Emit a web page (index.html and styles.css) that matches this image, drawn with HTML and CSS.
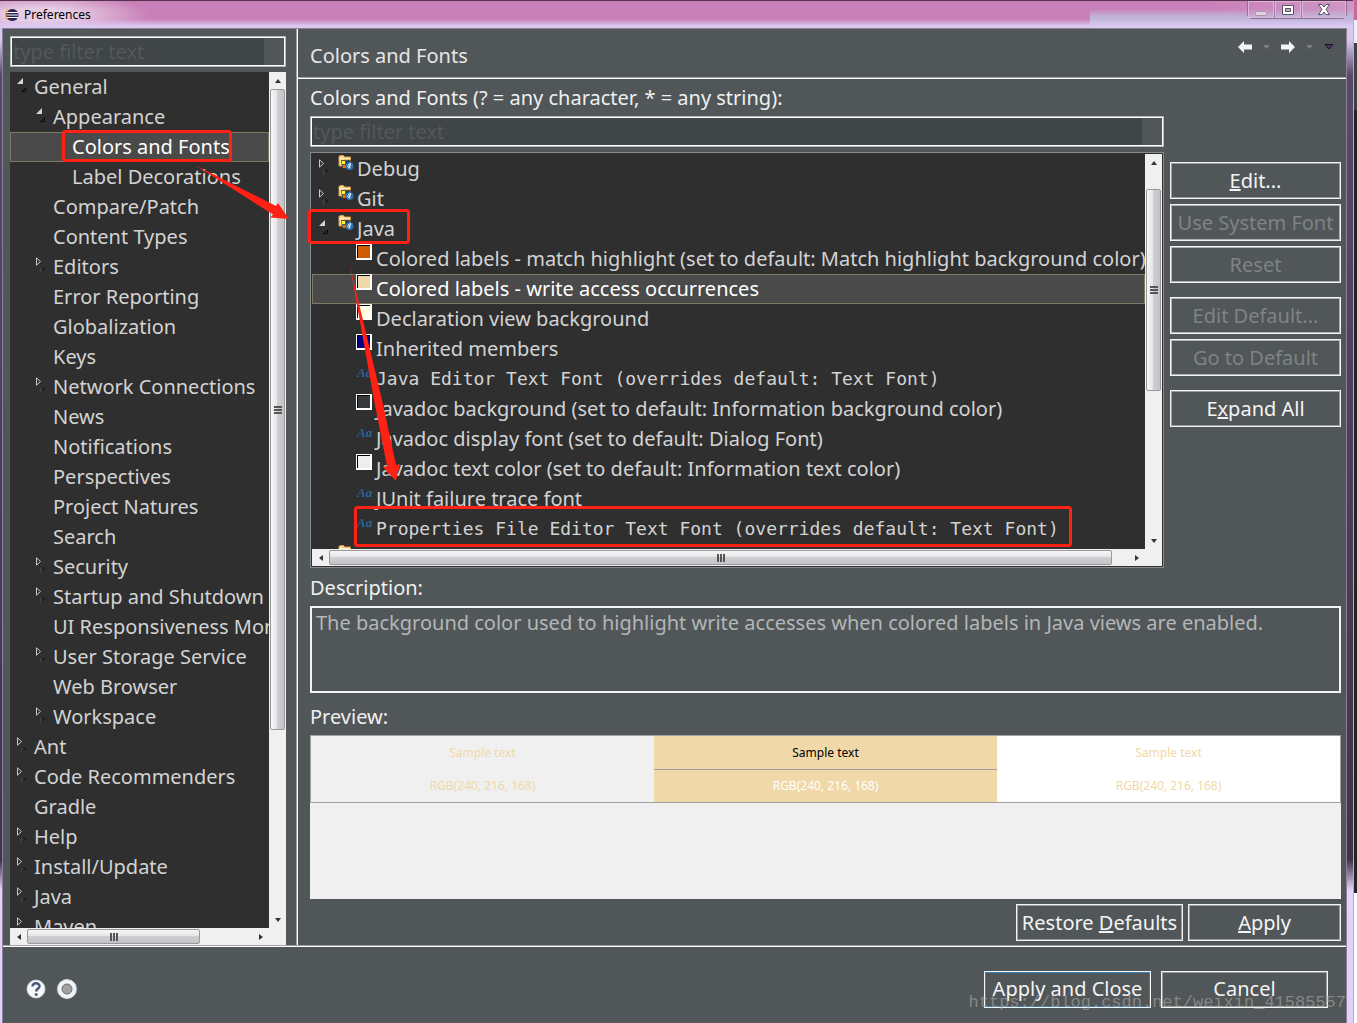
FILE: index.html
```
<!DOCTYPE html>
<html lang="en">
<head>
<meta charset="utf-8">
<title>Preferences</title>
<link rel="stylesheet" href="styles.css">
</head>
<body>
<svg class="defs" aria-hidden="true">
  <defs>
    <symbol id="open" viewBox="0 0 10 14"><path d="M6 0v6H0z" fill="#d4d4d4"/><path d="M8.500 10v3.500h-4z" fill="none" stroke="#090909"/></symbol>
    <symbol id="closed" viewBox="0 0 10 16"><path d="M.5.8v7.400L4.500 4.500z" fill="none" stroke="#c8c8c8"/><path d="M4.500 11v5" stroke="#444"/><path d="M7 10.500l1.500 1.500L7 13.500" fill="none" stroke="#0c0c0c"/></symbol>
    <symbol id="folder" viewBox="0 0 16 16">
      <path d="M1 3V1.500L2 .5h3.500l1 1.500h6V5H6v6H1z" fill="#fbd893" stroke="#d59b48"/>
      <path d="M1 3.500h11" stroke="#fff0c8"/>
      <path d="M3 5h10v8H4z" fill="#62583c"/>
      <path d="M4 6h3v3H4z" fill="#fff52c"/><path d="M8 6h3v3H8z" fill="#17347e"/><path d="M5 10h3v3H5z" fill="#ff6a00"/>
      <circle cx="11.500" cy="11" r="4" fill="#2f70aa"/><path d="M12.500 8.500c-3 0-3.500 4.500-1.500 4l1.500-4-1 5" fill="none" stroke="#d9efff"/>
    </symbol>
  </defs>
</svg>

<div class="window">
  <header class="titlebar">
    <svg class="logo" viewBox="0 0 14 14"><circle cx="6" cy="7" r="6" fill="#f59a31"/><circle cx="7.500" cy="7" r="6" fill="#29235c"/><path d="M2 4.500h11M2 7h11M2 9.500h11" stroke="#fff"/></svg>
    <span class="window-title">Preferences</span>
    <div class="window-controls">
      <button aria-label="Minimize"><svg width="12" height="6"><rect x=".5" y=".5" width="11" height="4" rx="1" fill="#e6cfe2" stroke="#a893ad"/></svg></button>
      <button aria-label="Maximize"><svg width="12" height="10"><path d="M.5.5h11v9H.5z" fill="#fff" stroke="#555566"/><path d="M3.500 3.500h5v3h-5z" fill="#c9a3cc" stroke="#555566"/></svg></button>
      <button class="close" aria-label="Close"><svg width="12" height="11" viewBox="0 0 12 11"><path d="M.5.5h3.500L6 3 8 .5h3.500L8 5.500l3.500 5H8L6 8l-2 2.500H.5L4 5.500z" fill="#fff" stroke="#555566"/></svg></button>
    </div>
  </header>

  <div class="dialog">
    <div class="main">
      <nav class="sidebar">
        <div class="field"><input type="text" placeholder="type filter text" aria-label="Filter preferences"></div>
        <div class="scrollpane">
          <ul class="tree nav-tree">
            <li><svg class="twisty"><use href="#open"/></svg>General</li>
            <li class="l2"><svg class="twisty"><use href="#open"/></svg>Appearance</li>
            <li class="l3 selected">Colors and Fonts</li>
            <li class="l3">Label Decorations</li>
            <li class="l2">Compare/Patch</li>
            <li class="l2">Content Types</li>
            <li class="l2"><svg class="twisty"><use href="#closed"/></svg>Editors</li>
            <li class="l2">Error Reporting</li>
            <li class="l2">Globalization</li>
            <li class="l2">Keys</li>
            <li class="l2"><svg class="twisty"><use href="#closed"/></svg>Network Connections</li>
            <li class="l2">News</li>
            <li class="l2">Notifications</li>
            <li class="l2">Perspectives</li>
            <li class="l2">Project Natures</li>
            <li class="l2">Search</li>
            <li class="l2"><svg class="twisty"><use href="#closed"/></svg>Security</li>
            <li class="l2"><svg class="twisty"><use href="#closed"/></svg>Startup and Shutdown</li>
            <li class="l2">UI Responsiveness Monitoring</li>
            <li class="l2"><svg class="twisty"><use href="#closed"/></svg>User Storage Service</li>
            <li class="l2">Web Browser</li>
            <li class="l2"><svg class="twisty"><use href="#closed"/></svg>Workspace</li>
            <li><svg class="twisty"><use href="#closed"/></svg>Ant</li>
            <li><svg class="twisty"><use href="#closed"/></svg>Code Recommenders</li>
            <li>Gradle</li>
            <li><svg class="twisty"><use href="#closed"/></svg>Help</li>
            <li><svg class="twisty"><use href="#closed"/></svg>Install/Update</li>
            <li><svg class="twisty"><use href="#closed"/></svg>Java</li>
            <li><svg class="twisty"><use href="#closed"/></svg>Maven</li>
          </ul>
          <div class="scroll vertical"><i class="arrow up"></i><div class="track"><div class="thumb nav-v"><i class="grip"></i></div></div><i class="arrow down"></i></div>
          <div class="scroll horizontal"><i class="arrow left"></i><div class="track"><div class="thumb nav-h"><i class="grip"></i></div></div><i class="arrow right"></i></div>
        </div>
      </nav>

      <main class="page">
        <div class="page-head">
          <h1>Colors and Fonts</h1>
          <div class="history">
            <button aria-label="Back"><svg width="14" height="12" viewBox="0 0 14 12"><path d="M0 6l6-6v3.500h8v5H6V12z" fill="#f4f4f4"/></svg></button>
            <button aria-label="Back history"><svg width="7" height="4"><path d="M0 0h7L3.500 4z" fill="#7c8082"/></svg></button>
            <button aria-label="Forward"><svg width="14" height="12" viewBox="0 0 14 12"><path d="M14 6L8 0v3.500H0v5h8V12z" fill="#f4f4f4"/></svg></button>
            <button aria-label="Forward history"><svg width="7" height="4"><path d="M0 0h7L3.500 4z" fill="#7c8082"/></svg></button>
            <button aria-label="Menu"><svg width="10" height="6"><path d="M1 .5h8L5 5z" fill="#4b3860" stroke="#1d102c"/></svg></button>
          </div>
        </div>
        <div class="page-body">
          <label class="caption" for="font-filter">Colors and Fonts (? = any character, * = any string):</label>
          <div class="chooser">
            <div class="chooser-list">
              <div class="field"><input id="font-filter" type="text" placeholder="type filter text"></div>
              <div class="scrollpane framed">
                <ul class="tree font-tree">
                  <li><svg class="twisty"><use href="#closed"/></svg><svg class="folder"><use href="#folder"/></svg>Debug</li>
                  <li><svg class="twisty"><use href="#closed"/></svg><svg class="folder"><use href="#folder"/></svg>Git</li>
                  <li><svg class="twisty"><use href="#open"/></svg><svg class="folder"><use href="#folder"/></svg>Java</li>
                  <li class="item"><i class="swatch orange"></i>Colored labels - match highlight (set to default: Match highlight background color)</li>
                  <li class="item selected"><i class="swatch sand"></i>Colored labels - write access occurrences</li>
                  <li class="item"><i class="swatch cream"></i>Declaration view background</li>
                  <li class="item"><i class="swatch navy"></i>Inherited members</li>
                  <li class="item mono"><i class="aa">Aa</i>Java Editor Text Font (overrides default: Text Font)</li>
                  <li class="item"><i class="swatch slate"></i>Javadoc background (set to default: Information background color)</li>
                  <li class="item"><i class="aa">Aa</i>Javadoc display font (set to default: Dialog Font)</li>
                  <li class="item"><i class="swatch light"></i>Javadoc text color (set to default: Information text color)</li>
                  <li class="item"><i class="aa">Aa</i>JUnit failure trace font</li>
                  <li class="item mono"><i class="aa">Aa</i>Properties File Editor Text Font (overrides default: Text Font)</li>
                  <li><svg class="folder"><use href="#folder"/></svg></li>
                </ul>
                <div class="scroll vertical"><i class="arrow up"></i><div class="track"><div class="thumb font-v"><i class="grip"></i></div></div><i class="arrow down"></i></div>
                <div class="scroll horizontal"><i class="arrow left"></i><div class="track"><div class="thumb font-h"><i class="grip"></i></div></div><i class="arrow right"></i></div>
              </div>
            </div>
            <div class="actions">
              <button class="btn"><span><u>E</u>dit...</span></button>
              <button class="btn" disabled>Use System Font</button>
              <button class="btn" disabled>Reset</button>
              <button class="btn group" disabled>Edit Default...</button>
              <button class="btn" disabled>Go to Default</button>
              <button class="btn group"><span>E<u>x</u>pand All</span></button>
            </div>
          </div>
          <label class="caption" for="description">Description:</label>
          <textarea id="description" readonly>The background color used to highlight write accesses when colored labels in Java views are enabled.</textarea>
          <div class="caption preview-caption">Preview:</div>
          <div class="preview">
            <div class="samples">
              <div class="sample"><span>Sample text</span><span>RGB(240, 216, 168)</span></div>
              <div class="sample filled"><span>Sample text</span><span>RGB(240, 216, 168)</span></div>
              <div class="sample white"><span>Sample text</span><span>RGB(240, 216, 168)</span></div>
            </div>
          </div>
          <div class="page-buttons">
            <button class="btn wide"><span>Restore <u>D</u>efaults</span></button>
            <button class="btn"><span><u>A</u>pply</span></button>
          </div>
        </div>
      </main>
    </div>

    <footer class="footer">
      <button class="round" aria-label="Help"><svg width="20" height="20" viewBox="0 0 20 20"><circle cx="10" cy="10" r="9" fill="#f6f7f9" stroke="#cbd2da"/><path d="M6.500 7.500C6.500 3 14 3.500 13.500 7.500 13.300 9.800 10.200 9.500 10.200 12.500" fill="none" stroke="#475a7c" stroke-width="2.500"/><circle cx="10.200" cy="15.500" r="1.500" fill="#475a7c"/></svg></button>
      <button class="round" aria-label="Record"><svg width="22" height="22" viewBox="0 0 22 22"><circle cx="11" cy="11" r="9.500" fill="#f2f2f2" stroke="#dce3ea"/><circle cx="11" cy="11" r="10" fill="none" stroke="#6d7f92" stroke-dasharray="2 4"/><circle cx="11" cy="11" r="5" fill="#a2a2a2" stroke="#6e6e6e"/></svg></button>
      <div class="footer-actions">
        <button class="btn wide primary">Apply and Close</button>
        <button class="btn wide">Cancel</button>
      </div>
    </footer>
  </div>
</div>
<div class="desktop"></div>

<svg class="marks" width="1357" height="1023" aria-hidden="true">
  <g fill="none" stroke="#ff2113" stroke-width="3">
    <rect x="63.500" y="131.500" width="167" height="29" rx="2"/>
    <rect x="309.500" y="210.500" width="99" height="32" rx="2"/>
    <rect x="355.500" y="507.500" width="715" height="38" rx="2"/>
  </g>
  <path d="M195 165L276 206 278 203 289 219 270 217.500 273 214.500zM350 266L382 400 396 465 400 464 396 481 383 467 387 466 374 400z" fill="#ff2113"/>
</svg>
<div class="watermark">https://blog.csdn.net/weixin_41585557</div>
</body>
</html>
```
FILE: styles.css
```
* { box-sizing: border-box; }
body {
  margin: 0;
  height: 100vh;
  display: flex;
  position: relative;
  overflow: hidden;
  font: 20px/30px "Noto Sans", "Open Sans", sans-serif;
  color: #d3d3d3;
  background: #2d2a30;
}
button { font: inherit; color: inherit; background: none; border: 0; padding: 0; }
.defs { position: absolute; width: 0; height: 0; }

.window {
  flex: 1;
  min-width: 0;
  display: flex;
  flex-direction: column;
  padding: 0 6px 0 2px;
  border-right: 1px solid #b9a9c6;
  background: linear-gradient(#d9c5ee, #d9c9f0 40px, #58496a 75px, #3f3349 860px, #e6d2fb 890px, #e2d0fb);
}
.desktop {
  width: 3px;
  background: linear-gradient(#c66a9b 0 20px, #eef0fa 20px 43px, #3d4244 43px 110px, #242424 110px 893px, #fff 893px);
}
.titlebar {
  height: 28px;
  margin: 0 -6px 0 -2px;
  padding-left: 5px;
  display: flex;
  align-items: center;
  gap: 5px;
  border-top: 1px solid #54324e;
  background:
    linear-gradient(transparent 0 18px, #dcc9f2 25px),
    radial-gradient(ellipse 110px 22px at 40px 14px, #e6cde3 30%, transparent),
    linear-gradient(transparent 8px, #c0b6da 16px) 1090px 0 / 100% 100% no-repeat,
    linear-gradient(90deg, #c97fb8 1200px, #cf96c4);
}
.logo { width: 14px; height: 14px; }
.window-title { font-size: 12px; line-height: 16px; color: #000; }
.window-controls { margin: 0 6px 0 auto; align-self: flex-start; height: 18px; display: flex; border: 1px solid #8f6f94; border-top: 0; border-radius: 0 0 5px 5px; }
.window-controls button { width: 27px; display: grid; place-items: center; border-right: 1px solid #a37da5; box-shadow: inset 0 0 0 1px #e0b5da; }
.window-controls button:first-child svg { margin-top: 8px; }
.window-controls .close { width: 44px; border: 0; }

.dialog { flex: 1; min-height: 0; display: flex; flex-direction: column; background: #515658; border: 1px solid #8b829a; border-width: 1px 1px 0; }
.main { flex: 1; min-height: 0; display: flex; border-bottom: 1px solid #fff; box-shadow: inset 0 -1px #a0a0a0; padding-bottom: 1px; }
.sidebar { width: 295px; flex: none; padding: 7px 11px 0 7px; display: flex; flex-direction: column; gap: 5px; border-right: 1px solid #fff; box-shadow: inset -1px 0 #a0a0a0; }

.field { height: 31px; flex: none; padding: 1px 21px 1px 1px; border: 1px solid #b4b7b8; box-shadow: inset 0 0 0 1px #fff; background: #515658; }
.field input { display: block; width: 100%; height: 27px; padding: 0 1px; border: 0; background: #404548; font: inherit; color: #d3d3d3; }
.field input::placeholder { color: #53585a; opacity: 1; }

.scrollpane { flex: 1; min-height: 0; display: grid; grid-template: minmax(0, 1fr) 17px / minmax(0, 1fr) 17px; background: #f0f0f0; }
.framed { border: 1px solid #868b8e; outline: 1px solid #2f2f2f; outline-offset: -2px; padding: 1px; }
.tree { margin: 0; padding: 0; list-style: none; overflow: hidden; background: #2f2f2f; }
.tree li { height: 30px; display: flex; align-items: center; position: relative; white-space: nowrap; border: 1px solid transparent; padding-left: 23px; }
.tree .l2 { padding-left: 42px; }
.tree .l3 { padding-left: 61px; }
.tree .selected { background: #4a4a4a; border-color: #7c7a62; color: #fff; }
.twisty { position: absolute; left: 6px; top: 4px; width: 10px; height: 16px; }
.l2 .twisty { left: 25px; }
.font-tree li { padding-left: 44px; }
.font-tree .item { padding-left: 63px; }
.folder { position: absolute; left: 25px; top: 0; width: 16px; height: 16px; }
.swatch { position: absolute; left: 43px; top: -1px; width: 16px; height: 16px; border: 1px solid #fff; border-width: 1px 2px 2px 1px; box-shadow: inset 1px 1px #000; }
.orange { background: #ce5c00; }
.sand { background: #f0d8a8; }
.cream { background: #ffffe1; }
.navy { background: #000080; }
.slate { background: #35393c; }
.light { background: #eee; }
.aa { position: absolute; left: 44px; top: 1px; font: italic bold 13px/14px "Liberation Serif", serif; color: #2a6496; }
.mono { font-family: "DejaVu Sans Mono", monospace; font-size: 18px; }

.scroll { display: flex; background: #f0f0f0; }
.vertical { flex-direction: column; }
.track { flex: 1; min-width: 0; min-height: 0; }
.thumb { display: grid; place-items: center; border: 1px solid #999; border-radius: 2px; }
.vertical .thumb { margin: 0 1px; background: linear-gradient(90deg, #f6f6f6, #e6e6e8 45%, #cfcfd3 50%, #c4c4c8); }
.horizontal .thumb { height: 15px; margin-top: 1px; background: linear-gradient(#f6f6f6, #e6e6e8 45%, #cfcfd3 50%, #c4c4c8); }
.nav-v { height: 78%; }
.nav-h { width: 77%; }
.font-v { height: 56%; position: relative; top: 5%; }
.font-h { width: 98%; }
.grip { width: 8px; height: 8px; }
.vertical .grip { background: repeating-linear-gradient(#555 0 2px, transparent 2px 3px); }
.horizontal .grip { background: repeating-linear-gradient(90deg, #555 0 2px, transparent 2px 3px); }
.arrow { width: 17px; height: 17px; display: grid; place-items: center; }
.arrow::before { content: ""; border: 3px solid transparent; }
.up::before { border-bottom: 4px solid #333; border-top: 0; }
.down::before { border-top: 4px solid #333; border-bottom: 0; }
.left::before { border-right: 4px solid #333; border-left: 0; }
.right::before { border-left: 4px solid #333; border-right: 0; }

.page { flex: 1; min-width: 0; display: flex; flex-direction: column; }
.page-head { height: 50px; flex: none; padding: 0 12px; display: flex; justify-content: space-between; align-items: center; border-bottom: 1px solid #fff; box-shadow: inset 0 -1px #a0a0a0; }
h1 { margin: 5px 0 0; font-size: 20px; font-weight: 400; line-height: 30px; color: #e6e6e6; }
.history { display: flex; align-items: center; gap: 11px; align-self: flex-start; margin-top: 12px; }
.history button { display: flex; }
.page-body { flex: 1; min-height: 0; padding: 3px 5px 4px 12px; display: flex; flex-direction: column; }
.caption { height: 34px; flex: none; line-height: 32px; color: #f0f0f0; }
.chooser { flex: 1; min-height: 0; display: flex; gap: 6px; margin-bottom: 4px; }
.chooser-list { flex: 1; min-width: 0; display: flex; flex-direction: column; gap: 5px; }
.actions { width: 171px; padding-top: 46px; display: flex; flex-direction: column; gap: 5px; }
.btn { height: 37px; flex: none; line-height: 30px; border: 1px solid #f4f4f4; box-shadow: inset 0 0 0 1px #9b9d9d; color: #f4f4f4; white-space: nowrap; }
.btn:disabled { color: #7f8384; box-shadow: inset 0 0 0 1px #b0b1b3; }
.group { margin-top: 9px; }
textarea { height: 87px; flex: none; display: block; padding: 0 4px; border: 2px solid #f4f4f4; background: #515658; color: #b4b6b7; font: inherit; resize: none; overflow: hidden; }
.preview-caption { margin-top: 8px; }
.preview { height: 164px; flex: none; background: #f0f0f0; }
.samples { display: grid; grid-template-columns: repeat(3, 1fr); border: 1px solid #a0a0a0; font-size: 12px; line-height: 33px; text-align: center; color: #f0d8a8; }
.sample { display: flex; flex-direction: column; }
.filled { background: #f0d8a8; color: #fff; }
.filled span:first-child { color: #000; box-shadow: 0 1px #a0a0a0; }
.white { background: #fff; }
.page-buttons { display: flex; justify-content: flex-end; gap: 5px; margin-top: 5px; }
.page-buttons .btn { width: 153px; }
.btn.wide, .page-buttons .wide { width: 167px; }

.footer { height: 76px; flex: none; display: flex; align-items: center; gap: 10px; padding: 8px 18px 0 23px; }
.round { display: flex; }
.footer-actions { margin-left: auto; display: flex; gap: 10px; }
.btn.primary { box-shadow: inset 0 0 0 1px #3c7fb1; }
.marks { position: absolute; left: 0; top: 0; pointer-events: none; }
.watermark { position: absolute; right: 11px; bottom: 9px; font: 17px/22px "Liberation Mono", monospace; color: rgba(170, 170, 165, .6); pointer-events: none; }
```
